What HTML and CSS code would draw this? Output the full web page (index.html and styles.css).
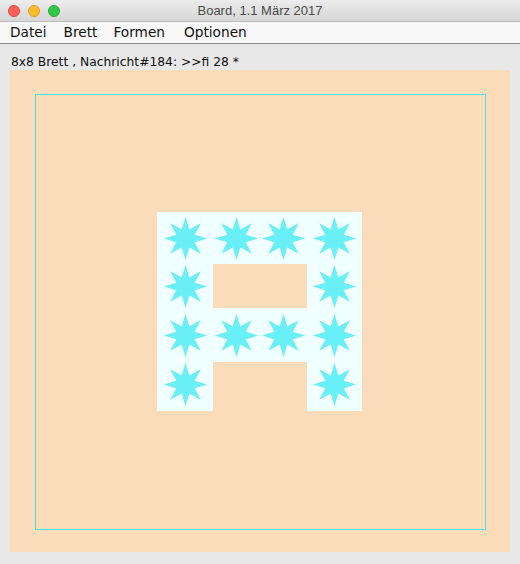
FILE: index.html
```html
<!DOCTYPE html>
<html lang="de">
<head>
<meta charset="utf-8">
<title>Board, 1.1 März 2017</title>
<link rel="stylesheet" href="styles.css">
</head>
<body>
<svg class="defs" width="0" height="0" aria-hidden="true">
  <defs>
    <polygon id="star" points="25,2 29.02,15.3 41.26,8.74 34.7,20.98 48,25 34.7,29.02 41.26,41.26 29.02,34.7 25,48 20.98,34.7 8.74,41.26 15.3,29.02 2,25 15.3,20.98 8.74,8.74 20.98,15.3"/>
  </defs>
</svg>
<div class="window">
  <div class="titlebar">
    <div class="lights">
      <span class="light red"></span>
      <span class="light yellow"></span>
      <span class="light green"></span>
    </div>
    <div class="title">Board, 1.1 März 2017</div>
  </div>
  <div class="menubar">
    <span class="menu m1">Datei</span>
    <span class="menu m2">Brett</span>
    <span class="menu m3">Formen</span>
    <span class="menu m4">Optionen</span>
  </div>
  <div class="status">8x8 Brett , Nachricht#184: &gt;&gt;fi 28 *</div>
  <div class="board">
    <div class="field">
      <div class="shape">
        <div class="cell"><svg class="star" viewBox="0 0 50 50"><use href="#star"/></svg></div>
        <div class="cell"><svg class="star" viewBox="0 0 50 50"><use href="#star"/></svg></div>
        <div class="cell"><svg class="star" viewBox="0 0 50 50"><use href="#star"/></svg></div>
        <div class="cell"><svg class="star" viewBox="0 0 50 50"><use href="#star"/></svg></div>

        <div class="cell"><svg class="star" viewBox="0 0 50 50"><use href="#star"/></svg></div>
        <div class="cell hole"></div>
        <div class="cell hole"></div>
        <div class="cell"><svg class="star" viewBox="0 0 50 50"><use href="#star"/></svg></div>

        <div class="cell"><svg class="star" viewBox="0 0 50 50"><use href="#star"/></svg></div>
        <div class="cell"><svg class="star" viewBox="0 0 50 50"><use href="#star"/></svg></div>
        <div class="cell"><svg class="star" viewBox="0 0 50 50"><use href="#star"/></svg></div>
        <div class="cell"><svg class="star" viewBox="0 0 50 50"><use href="#star"/></svg></div>

        <div class="cell low"><svg class="star" viewBox="0 0 50 50"><use href="#star"/></svg></div>
        <div class="cell hole"></div>
        <div class="cell hole"></div>
        <div class="cell low"><svg class="star" viewBox="0 0 50 50"><use href="#star"/></svg></div>
      </div>
    </div>
  </div>
</div>
</body>
</html>
```

FILE: styles.css
```css
html, body {
  margin: 0;
  padding: 0;
}
body {
  width: 520px;
  height: 564px;
  background: #e8e8e8;
  font-family: "DejaVu Sans", "Liberation Sans", sans-serif;
  overflow: hidden;
}
.defs {
  position: absolute;
  width: 0;
  height: 0;
}
.window {
  display: flex;
  flex-direction: column;
  height: 564px;
}
.titlebar {
  height: 22px;
  box-sizing: border-box;
  background: linear-gradient(#ececec, #d6d6d6);
  border-bottom: 1px solid #bcbcbc;
  display: flex;
  align-items: center;
  position: relative;
}
.lights {
  display: flex;
  gap: 8px;
  padding-left: 8px;
}
.light {
  width: 12px;
  height: 12px;
  border-radius: 50%;
  box-sizing: border-box;
}
.red { background: #fc5f57; border: 1px solid #de4740; }
.yellow { background: #fdbc2e; border: 1px solid #dd9e22; }
.green { background: #33c748; border: 1px solid #27aa35; }
.title {
  position: absolute;
  left: 0;
  right: 0;
  top: 0;
  line-height: 21px;
  text-align: center;
  font-size: 13px;
  color: #4b4b4b;
  font-family: "Liberation Sans", "DejaVu Sans", sans-serif;
}
.menubar {
  height: 22px;
  box-sizing: border-box;
  background: #f8f8f8;
  border-bottom: 1px solid #8a8a8a;
  display: flex;
  line-height: 21px;
  font-size: 13.7px;
  color: #111;
}
.menu { display: block; }
.m1 { margin-left: 10px; }
.m2 { margin-left: 17px; }
.m3 { margin-left: 16px; }
.m4 { margin-left: 19px; }
.status {
  height: 26px;
  box-sizing: border-box;
  padding: 10px 0 0 11px;
  font-size: 12.3px;
  line-height: 16px;
  color: #111;
}
.board {
  margin: 0 10px;
  height: 482px;
  box-sizing: border-box;
  background: #fadcbb;
  padding: 24px 24px 0 25px;
}
.field {
  width: 451px;
  height: 436px;
  box-sizing: border-box;
  border: 1px solid #40e4ea;
  padding: 117px 0 0 121px;
}
.shape {
  display: grid;
  grid-template-columns: 56px 47px 47px 55px;
  grid-template-rows: 52px 44px 54px 49px;
  width: 205px;
}
.cell {
  background: #f0ffff;
  display: flex;
  align-items: center;
  justify-content: center;
}
.cell.low {
  align-items: flex-start;
}
.cell.low .star {
  margin-top: -1px;
}
.cell.hole {
  background: transparent;
}
.star {
  width: 47px;
  height: 47px;
  flex: none;
  fill: #68eff8;
}
```
